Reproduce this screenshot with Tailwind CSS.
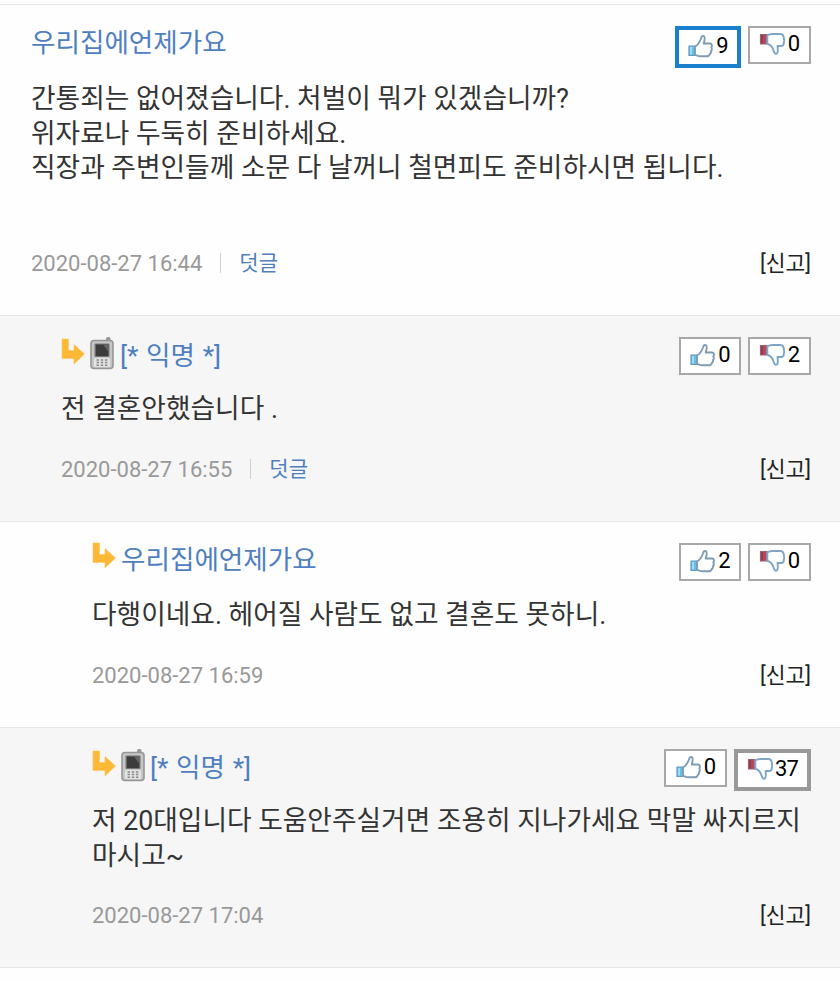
<!DOCTYPE html>
<html lang="ko">
<head>
<meta charset="utf-8">
<title>댓글</title>
<script src="https://cdn.jsdelivr.net/npm/@tailwindcss/browser@4"></script>
</head>
<body class="bg-[#fefefe] font-[Roboto,'Noto_Sans_CJK_KR',sans-serif] text-[#333] w-[840px] h-[981px] overflow-hidden">
<svg class="hidden">
  <symbol id="up" viewBox="0 0 26 24">
    <path d="M2 12h6v9.500H2z" fill="#65bde9" stroke="#6299b9" stroke-width="1.200"/>
    <path d="M3 13h2v7.500H3z" fill="#a1dcf7"/>
    <path d="M8 12.500C11 11 12.500 8.500 14 4.500C14.600 2.400 15.500 1.500 16.600 2C18.100 2.600 17.800 6 16.700 9.500H23C25.300 9.500 25.300 12.500 24.300 13.500C25.200 14.800 24.800 16.500 24 17C24.300 18.500 23.500 19.500 22.900 19.900C22.500 21.500 21.500 22.300 19.500 22.300H14C11.500 22.300 10 21.500 8 20.700Z" fill="#fdfefe" stroke="#7f9cb2" stroke-width="1.900" stroke-linejoin="round"/>
  </symbol>
  <symbol id="down" viewBox="0 0 26 24">
    <path d="M1.500 2.500h6.500v9.500h-6.500z" fill="#b8475a" stroke="#9c6074" stroke-width="1.200"/>
    <path d="M2 3h2v8.500H2z" fill="#913d55"/>
    <path d="M8.300 3.500C10 2.300 11 2 13.500 2H21C23 2 24 2.500 24.200 4C24.800 4.500 25 5.800 24.800 7C25.300 8 25.300 9.500 24.800 10.300C25 12 24.500 14 22.500 14H18.500C19 17.500 19.300 21 17.500 21.700C16 22.200 15.300 20.800 14.700 19C13.600 15.500 11.500 12.500 8.300 11.800Z" fill="#fdfefe" stroke="#7fa5c4" stroke-width="1.900" stroke-linejoin="round"/>
  </symbol>
  <symbol id="reply" viewBox="0 0 24 28">
    <path d="M1 1H7.500V12.500H13V6.500L23.500 16L13 26V20.500H1Z" fill="#fdb935" stroke="#fcc45c" stroke-width=".6"/>
  </symbol>
  <symbol id="phone" viewBox="0 0 24 34">
    <rect x="16" y="1" width="4.500" height="8" rx="1.500" fill="#999"/>
    <rect x="1" y="4.500" width="22" height="28" rx="3" fill="#c6c6c6" stroke="#969696" stroke-width="1.600"/>
    <rect x="4.500" y="7.500" width="15" height="13.500" rx="1" fill="#777"/>
    <rect x="5.800" y="8.500" width="12.500" height="11.500" fill="#3c3c3c"/>
    <path d="M13 8.500h5.300v7Z" fill="#666"/>
    <rect x="4" y="22" width="16" height="9" rx="1.500" fill="#e4e4e4"/>
    <path d="M6.500 23.900h2.500m1.700 0h2.500m1.700 0h2.500M6.500 26.600h2.500m1.700 0h2.500m1.700 0h2.500M6.500 29.300h2.500m1.700 0h2.500m1.700 0h2.500" stroke="#888" stroke-width="1.500"/>
  </symbol>
</svg>

<main class="mt-1 border-y border-[#e8e8e8] h-[964px]">
  <article class="h-[310px] pl-[31px] pr-[29px] pt-[21px] flex flex-col">
    <header class="flex justify-between items-start h-[56px]">
      <h3 class="pt-px text-[26.600px] leading-[32px] text-[#4f7fc0]">우리집에언제가요</h3>
      <div class="flex items-start gap-[7px] text-[22px] leading-none text-black">
        <button class="w-[66px] h-[42px] pb-[2px] border-4 border-[#1a80cb] bg-white flex items-center justify-center gap-[3px]"><svg class="w-[26px] h-6"><use href="#up"/></svg>9</button>
        <button class="w-[63px] h-[38px] pb-[2px] border-2 border-[#a8a8a8] bg-white flex items-center justify-center gap-[3px]"><svg class="w-[26px] h-6"><use href="#down"/></svg>0</button>
      </div>
    </header>
    <p class="text-[26.720px] leading-[34.500px] whitespace-nowrap">간통죄는 없어졌습니다. 처벌이 뭐가 있겠습니까?<br>위자료나 두둑히 준비하세요.<br>직장과 주변인들께 소문 다 날꺼니 철면피도 준비하시면 됩니다.</p>
    <footer class="mt-auto mb-[37px] flex items-center h-[30px] text-[22px]">
      <time class="text-[#999]">2020-08-27 16:44</time><span class="w-px h-5 bg-[#d0d0d0] ml-[18px] mr-[18px]"></span><a class="pt-[2px] text-[21px] text-[#4f7fc0]">덧글</a><a class="pt-[2px] ml-auto text-[21.500px] text-[#222]">[신고]</a>
    </footer>
  </article>

  <article class="h-[206px] bg-[#f6f6f6] border-t border-[#e6e6e6] pl-[61px] pr-[29px] pt-[21px] flex flex-col">
    <header class="flex justify-between items-start h-[55px]">
      <div class="flex items-start"><svg class="w-6 h-7 mt-px"><use href="#reply"/></svg><svg class="w-6 h-[34px] ml-[5px] -mt-px"><use href="#phone"/></svg><h3 class="ml-[6px] mt-[3px] text-[26.600px] leading-[32px] [word-spacing:1px] text-[#4f7fc0]">[* 익명 *]</h3></div>
      <div class="flex items-start gap-[7px] text-[22px] leading-none text-black">
        <button class="w-[62px] h-[38px] pb-[2px] border-2 border-[#a8a8a8] bg-white flex items-center justify-center gap-[3px]"><svg class="w-[26px] h-6"><use href="#up"/></svg>0</button>
        <button class="w-[63px] h-[38px] pb-[2px] border-2 border-[#a8a8a8] bg-white flex items-center justify-center gap-[3px]"><svg class="w-[26px] h-6"><use href="#down"/></svg>2</button>
      </div>
    </header>
    <p class="text-[26.720px] leading-[34.500px] whitespace-nowrap">전 결혼안했습니다 .</p>
    <footer class="mt-auto mb-[37px] flex items-center h-[30px] text-[22px]">
      <time class="text-[#999]">2020-08-27 16:55</time><span class="w-px h-5 bg-[#d0d0d0] ml-[18px] mr-[18px]"></span><a class="pt-[2px] text-[21px] text-[#4f7fc0]">덧글</a><a class="pt-[2px] ml-auto text-[21.500px] text-[#222]">[신고]</a>
    </footer>
  </article>

  <article class="h-[206px] border-t border-[#e6e6e6] pl-[92px] pr-[29px] pt-[21px] flex flex-col">
    <header class="flex justify-between items-start h-[55px]">
      <div class="flex items-start"><svg class="w-6 h-7 -mt-px"><use href="#reply"/></svg><h3 class="ml-[5px] pt-px text-[26.600px] leading-[32px] text-[#4f7fc0]">우리집에언제가요</h3></div>
      <div class="flex items-start gap-[7px] text-[22px] leading-none text-black">
        <button class="w-[62px] h-[38px] pb-[2px] border-2 border-[#a8a8a8] bg-white flex items-center justify-center gap-[3px]"><svg class="w-[26px] h-6"><use href="#up"/></svg>2</button>
        <button class="w-[63px] h-[38px] pb-[2px] border-2 border-[#a8a8a8] bg-white flex items-center justify-center gap-[3px]"><svg class="w-[26px] h-6"><use href="#down"/></svg>0</button>
      </div>
    </header>
    <p class="text-[26.720px] leading-[34.500px] whitespace-nowrap">다행이네요. 헤어질 사람도 없고 결혼도 못하니.</p>
    <footer class="mt-auto mb-[37px] flex items-center h-[30px] text-[22px]">
      <time class="text-[#999]">2020-08-27 16:59</time><a class="pt-[2px] ml-auto text-[21.500px] text-[#222]">[신고]</a>
    </footer>
  </article>

  <article class="h-[240px] bg-[#f6f6f6] border-t border-[#e6e6e6] pl-[92px] pr-[29px] pt-[21px] flex flex-col">
    <header class="flex justify-between items-start h-[55px]">
      <div class="flex items-start"><svg class="w-6 h-7 mt-px"><use href="#reply"/></svg><svg class="w-6 h-[34px] ml-[5px] -mt-px"><use href="#phone"/></svg><h3 class="ml-[5px] mt-[3px] text-[26.600px] leading-[32px] [word-spacing:1px] text-[#4f7fc0]">[* 익명 *]</h3></div>
      <div class="flex items-start gap-[7px] text-[22px] leading-none text-black">
        <button class="w-[63px] h-[38px] pb-[2px] border-2 border-[#a8a8a8] bg-white flex items-center justify-center gap-[3px]"><svg class="w-[26px] h-6"><use href="#up"/></svg>0</button>
        <button class="w-[77px] h-[42px] pb-[2px] border-4 border-[#999] bg-white flex items-center justify-center gap-[2px] tracking-[-0.8px]"><svg class="w-[26px] h-6"><use href="#down"/></svg>37</button>
      </div>
    </header>
    <p class="text-[26.720px] leading-[34.500px] whitespace-nowrap">저 20대입니다 도움안주실거면 조용히 지나가세요 막말 싸지르지<br>마시고~</p>
    <footer class="mt-auto mb-[37px] flex items-center h-[30px] text-[22px]">
      <time class="text-[#999]">2020-08-27 17:04</time><a class="pt-[2px] ml-auto text-[21.500px] text-[#222]">[신고]</a>
    </footer>
  </article>
</main>
</body>
</html>
